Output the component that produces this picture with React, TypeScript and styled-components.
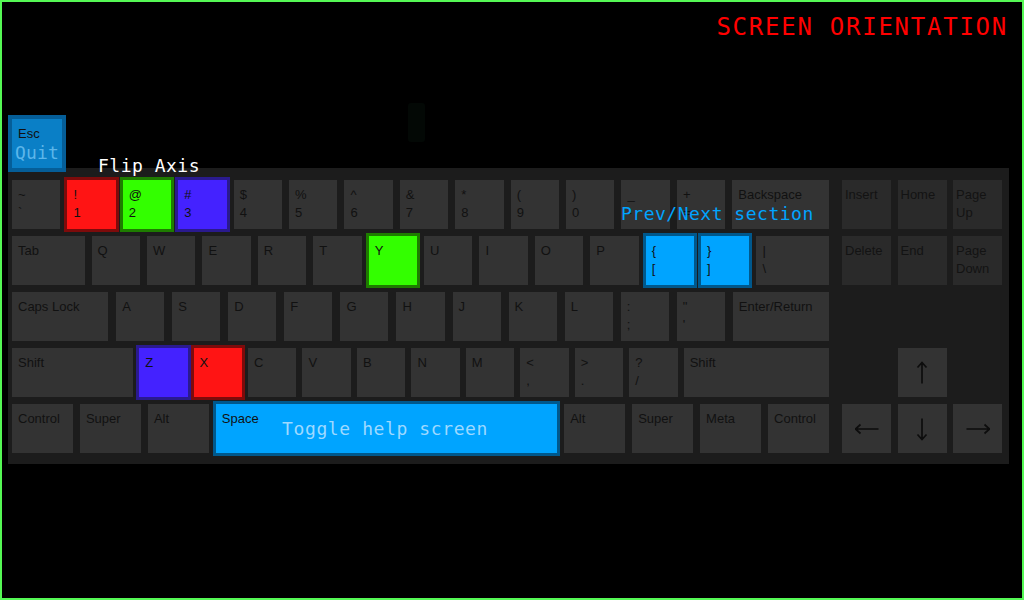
import React from "react";
import styled, { createGlobalStyle } from "styled-components";

const GlobalStyle = createGlobalStyle`
  html, body { margin: 0; padding: 0; background: #000; }
  body { width: 1024px; height: 600px; overflow: hidden; }
`;

type Tone = "plain" | "dim" | "red" | "green" | "violet" | "cyan" | "esc";

const TONES: Record<Tone, { bg: string; ring: string; ringWidth: number; ink: string }> = {
  plain: { bg: "#333333", ring: "transparent", ringWidth: 0, ink: "#111111" },
  dim: { bg: "#2a2a2a", ring: "transparent", ringWidth: 0, ink: "#131313" },
  red: { bg: "#ff1414", ring: "#7d0b0b", ringWidth: 3, ink: "#111111" },
  green: { bg: "#33ff00", ring: "#1e7c00", ringWidth: 3, ink: "#111111" },
  violet: { bg: "#4422ff", ring: "#2a1a8e", ringWidth: 3, ink: "#111111" },
  cyan: { bg: "#00a4ff", ring: "#00588c", ringWidth: 3, ink: "#111111" },
  esc: { bg: "#0a7fc6", ring: "#055e98", ringWidth: 4, ink: "#111111" },
};

const MONO = `"DejaVu Sans Mono", "Liberation Mono", monospace`;

const Screen = styled.div`
  position: relative;
  width: 1024px;
  height: 600px;
  box-sizing: border-box;
  border: 2px solid #55f855;
  background: #000;
  display: flex;
  flex-direction: column;
  align-items: flex-start;
  font-family: "Liberation Sans", Arial, sans-serif;
`;

const TitleBar = styled.header`
  align-self: stretch;
  display: flex;
  justify-content: flex-end;
  padding: 13px 14px 0 0;
`;

const Title = styled.h1`
  margin: 0;
  font-family: ${MONO};
  font-weight: normal;
  font-size: 24px;
  line-height: 24px;
  letter-spacing: 1.75px;
  color: #ff0000;
`;

const Ghost = styled.div`
  position: absolute;
  left: 406px;
  top: 101px;
  width: 17px;
  height: 39px;
  border-radius: 3px;
  background: #030805;
`;

const Key = styled.div<{ $tone: Tone; $grow?: number; $padX?: number }>`
  position: relative;
  flex: ${(p) => p.$grow ?? 1} ${(p) => p.$grow ?? 1} ${(p) => (p.$grow ?? 1) * 20}px;
  min-width: 0;
  height: 49px;
  box-sizing: border-box;
  padding: 6px ${(p) => p.$padX ?? 6}px 0;
  display: flex;
  flex-direction: column;
  background: ${(p) => TONES[p.$tone].bg};
  outline: ${(p) => TONES[p.$tone].ringWidth}px solid ${(p) => TONES[p.$tone].ring};
  outline-offset: 0;
  color: ${(p) => TONES[p.$tone].ink};
  font-size: 13px;
  line-height: 18px;
  white-space: nowrap;
  overflow: visible;
`;

const EscKey = styled(Key)`
  flex: none;
  width: 50px;
  margin: 80px 0 0 10px;
  z-index: 2;
`;

const QuitLine = styled.span`
  align-self: center;
  margin-top: 1px;
  font-family: ${MONO};
  font-size: 18px;
  line-height: 18px;
  letter-spacing: 0.2px;
  color: #5cb6ea;
`;

const Panel = styled.section`
  position: relative;
  margin-left: 6px;
  width: 1001px;
  height: 296px;
  box-sizing: border-box;
  padding: 12px 7px 11px 4px;
  background: #1c1c1c;
  display: flex;
  gap: 13px;
`;

const MainBlock = styled.div`
  width: 817px;
  flex: none;
  display: flex;
  flex-direction: column;
  gap: 7px;
`;

const Row = styled.div<{ $gap: number }>`
  display: flex;
  gap: ${(p) => p.$gap}px;
  height: 49px;
`;

const NavBlock = styled.div`
  width: 160px;
  flex: none;
  display: grid;
  grid-template-columns: repeat(3, 49px);
  grid-template-rows: repeat(5, 49px);
  column-gap: 6.5px;
  row-gap: 7px;
`;

const NavKey = styled(Key)<{ $col: number; $row: number }>`
  grid-column: ${(p) => p.$col};
  grid-row: ${(p) => p.$row};
  height: auto;
`;

const ArrowKey = styled(NavKey)`
  padding: 0;
  align-items: center;
  justify-content: center;
`;

const Annotation = styled.div<{ $x: number; $y: number; $color: string }>`
  position: absolute;
  left: ${(p) => p.$x}px;
  top: ${(p) => p.$y}px;
  font-family: ${MONO};
  font-size: 18px;
  line-height: 18px;
  letter-spacing: 0.5px;
  color: ${(p) => p.$color};
  white-space: nowrap;
  z-index: 3;
`;

const Hint = styled.div`
  position: absolute;
  inset: 0;
  display: flex;
  align-items: center;
  justify-content: center;
  padding-right: 3px;
  font-family: ${MONO};
  font-size: 18px;
  line-height: 18px;
  letter-spacing: 0.6px;
  color: #9ed9ff;
`;

interface KeyDef {
  top: string;
  bottom?: string;
  grow?: number;
  tone?: Tone;
  hint?: string;
}

const k = (top: string, bottom?: string, tone?: Tone, grow?: number): KeyDef => ({ top, bottom, tone, grow });

const ROWS: { gap: number; keys: KeyDef[] }[] = [
  {
    gap: 7,
    keys: [
      k("~", "`"),
      k("!", "1", "red"),
      k("@", "2", "green"),
      k("#", "3", "violet"),
      k("$", "4"),
      k("%", "5"),
      k("^", "6"),
      k("&", "7"),
      k("*", "8"),
      k("(", "9"),
      k(")", "0"),
      k("_", "-"),
      k("+", "="),
      k("Backspace", undefined, undefined, 2),
    ],
  },
  {
    gap: 7,
    keys: [
      k("Tab", undefined, undefined, 1.5),
      k("Q"),
      k("W"),
      k("E"),
      k("R"),
      k("T"),
      k("Y", undefined, "green"),
      k("U"),
      k("I"),
      k("O"),
      k("P"),
      k("{", "[", "cyan"),
      k("}", "]", "cyan"),
      k("|", "\\", undefined, 1.5),
    ],
  },
  {
    gap: 8,
    keys: [
      k("Caps Lock", undefined, undefined, 2),
      k("A"),
      k("S"),
      k("D"),
      k("F"),
      k("G"),
      k("H"),
      k("J"),
      k("K"),
      k("L"),
      k(":", ";"),
      k("\"", "'"),
      k("Enter/Return", undefined, undefined, 2),
    ],
  },
  {
    gap: 6,
    keys: [
      k("Shift", undefined, undefined, 2.5),
      k("Z", undefined, "violet"),
      k("X", undefined, "red"),
      k("C"),
      k("V"),
      k("B"),
      k("N"),
      k("M"),
      k("<", ","),
      k(">", "."),
      k("?", "/"),
      k("Shift", undefined, undefined, 3),
    ],
  },
  {
    gap: 7,
    keys: [
      k("Control", undefined, undefined, 1.25),
      k("Super", undefined, undefined, 1.25),
      k("Alt", undefined, undefined, 1.25),
      { top: "Space", tone: "cyan", grow: 7, hint: "Toggle help screen" },
      k("Alt", undefined, undefined, 1.25),
      k("Super", undefined, undefined, 1.25),
      k("Meta", undefined, undefined, 1.25),
      k("Control", undefined, undefined, 1.25),
    ],
  },
];

const NAV: { top: string; bottom?: string; col: number; row: number }[] = [
  { top: "Insert", col: 1, row: 1 },
  { top: "Home", col: 2, row: 1 },
  { top: "Page", bottom: "Up", col: 3, row: 1 },
  { top: "Delete", col: 1, row: 2 },
  { top: "End", col: 2, row: 2 },
  { top: "Page", bottom: "Down", col: 3, row: 2 },
];

type Dir = "up" | "down" | "left" | "right";
const ARROW_PATHS: Record<Dir, string> = {
  up: "M12 1.5 V22.5 M7.5 6.5 L12 1.5 L16.5 6.5",
  down: "M12 1.5 V22.5 M7.5 17.5 L12 22.5 L16.5 17.5",
  left: "M0.5 12 H23.5 M5.5 7.5 L0.5 12 L5.5 16.5",
  right: "M0.5 12 H23.5 M18.5 7.5 L23.5 12 L18.5 16.5",
};

const ARROWS: { dir: Dir; col: number; row: number }[] = [
  { dir: "up", col: 2, row: 4 },
  { dir: "left", col: 1, row: 5 },
  { dir: "down", col: 2, row: 5 },
  { dir: "right", col: 3, row: 5 },
];

const Arrow: React.FC<{ dir: Dir }> = ({ dir }) => (
  <svg width="24" height="24" viewBox="0 0 24 24" fill="none">
    <path d={ARROW_PATHS[dir]} stroke="#0d0d0d" strokeWidth="1.7" strokeLinecap="butt" />
  </svg>
);

const KeyCap: React.FC<{ def: KeyDef }> = ({ def }) => (
  <Key $tone={def.tone ?? "plain"} $grow={def.grow}>
    <span>{def.top}</span>
    {def.bottom && <span>{def.bottom}</span>}
    {def.hint && <Hint>{def.hint}</Hint>}
  </Key>
);

export default function App() {
  return (
    <>
      <GlobalStyle />
      <Screen>
        <TitleBar>
          <Title>SCREEN ORIENTATION</Title>
        </TitleBar>
        <Ghost />
        <EscKey $tone="esc">
          <span>Esc</span>
          <QuitLine>Quit</QuitLine>
        </EscKey>
        <Panel>
          <Annotation $x={90} $y={-11} $color="#ffffff">
            Flip Axis
          </Annotation>
          <Annotation $x={613} $y={37} $color="#00a4ff">
            Prev/Next section
          </Annotation>
          <MainBlock>
            {ROWS.map((row, i) => (
              <Row key={i} $gap={row.gap}>
                {row.keys.map((def, j) => (
                  <KeyCap key={j} def={def} />
                ))}
              </Row>
            ))}
          </MainBlock>
          <NavBlock>
            {NAV.map((n) => (
              <NavKey key={`${n.col}-${n.row}`} $tone="dim" $col={n.col} $row={n.row} $padX={3}>
                <span>{n.top}</span>
                {n.bottom && <span>{n.bottom}</span>}
              </NavKey>
            ))}
            {ARROWS.map((a) => (
              <ArrowKey key={a.dir} $tone="plain" $col={a.col} $row={a.row}>
                <Arrow dir={a.dir} />
              </ArrowKey>
            ))}
          </NavBlock>
        </Panel>
      </Screen>
    </>
  );
}
